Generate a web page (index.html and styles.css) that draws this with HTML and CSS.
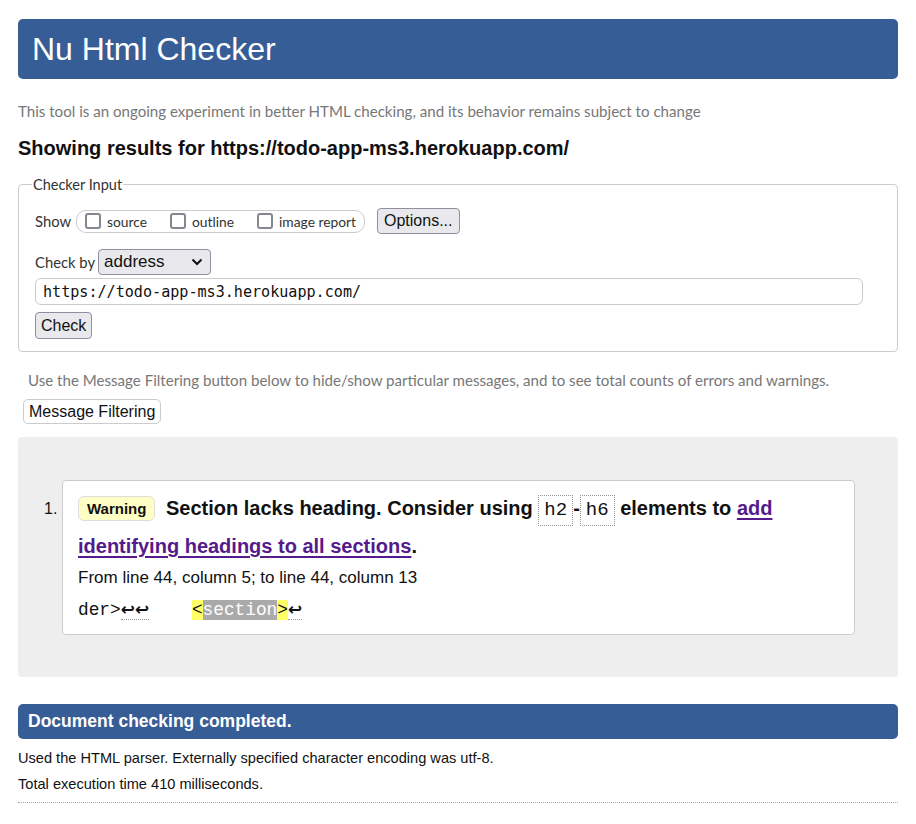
FILE: index.html
```html
<!DOCTYPE html>
<html lang="en">
<head>
<meta charset="utf-8">
<title>Nu Html Checker</title>
<link rel="stylesheet" href="styles.css">
</head>
<body>
<h1 class="title">Nu Html Checker</h1>
<p class="intro">This tool is an ongoing experiment in better HTML checking, and its behavior remains subject to change</p>
<h2 class="showing">Showing results for https://todo-app-ms3.herokuapp.com/</h2>

<fieldset class="input">
  <legend>Checker Input</legend>
  <div class="row show-row">
    <span class="label">Show</span>
    <span class="opts">
      <label class="opt"><span class="cb"></span>source</label>
      <label class="opt"><span class="cb"></span>outline</label>
      <label class="opt"><span class="cb"></span>image report</label>
    </span>
    <button class="btn options">Options...</button>
  </div>
  <div class="row by-row">
    <span class="label">Check by</span>
    <span class="select">address
      <svg class="chev" width="12" height="8" viewBox="0 0 12 8"><path d="M1.5 1.5 L6 6 L10.5 1.5" fill="none" stroke="#111" stroke-width="2"/></svg>
    </span>
  </div>
  <div class="url">https://todo-app-ms3.herokuapp.com/</div>
  <button class="btn check">Check</button>
</fieldset>

<p class="filter-note">Use the Message Filtering button below to hide/show particular messages, and to see total counts of errors and warnings.</p>
<button class="filter-btn">Message Filtering</button>

<div class="results">
  <ol class="messages">
    <li class="msg">
      <p class="msg-text"><span class="badge">Warning</span> <span class="msg-body">Section lacks heading. Consider using <code class="tag">h2</code>-<code class="tag">h6</code> elements to <a href="#">add identifying headings to all sections</a>.</span></p>
      <p class="location">From line 44, column 5; to line 44, column 13</p>
      <p class="extract"><code>der&gt;<span class="lf">↩↩</span>    <b class="hl"><span class="edge">&lt;</span><span class="mid">section</span><span class="edge">&gt;</span></b><span class="lf">↩</span></code></p>
    </li>
  </ol>
</div>

<h2 class="done">Document checking completed.</h2>
<p class="stat first">Used the HTML parser. Externally specified character encoding was utf-8.</p>
<p class="stat">Total execution time 410 milliseconds.</p>
<hr class="rule">
</body>
</html>
```
FILE: styles.css
```css
html, body { margin: 0; padding: 0; background: #fff; }
body {
  padding: 19px 18px 0 18px;
  font-family: "Liberation Sans", Arial, sans-serif;
  color: #111;
}
.title {
  margin: 0;
  height: 60px;
  box-sizing: border-box;
  padding: 11px 14px 0;
  background: #365d96;
  color: #fff;
  border-radius: 5px;
  font-weight: normal;
  font-size: 32px;
  line-height: 38px;
}
.intro {
  margin: 22px 0 0;
  font-family: "Lato", "Noto Sans", sans-serif;
  font-size: 15.1px;
  line-height: 20px;
  color: #777;
}
.showing {
  margin: 15px 0 0;
  font-size: 20px;
  line-height: 24px;
  font-weight: bold;
  color: #111;
}
.input {
  margin: 16px 0 0;
  padding: 14px 16px 12px 16px;
  border: 1px solid #ccc;
  border-radius: 4px;
  min-width: 0;
}
.input legend {
  padding: 0 1px;
  margin-left: -3px;
  font-family: "Lato", "Noto Sans", sans-serif;
  font-size: 14.5px;
  color: #333;
}
.row { display: flex; align-items: center; }
.label {
  font-family: "Lato", "Noto Sans", sans-serif;
  font-size: 14.8px;
  color: #333;
}
.show-row { height: 28px; }
.opts {
  display: inline-flex;
  align-items: center;
  margin-left: 5px;
  height: 23px;
  padding: 0 8px 0 8px;
  border: 1px solid #ccc;
  border-radius: 10px;
  box-sizing: border-box;
}
.opt {
  display: inline-flex;
  align-items: center;
  font-family: "Lato", "Noto Sans", sans-serif;
  font-size: 13.8px;
  color: #333;
  margin-right: 23px;
}
.opt:last-child { margin-right: 0; }
.cb {
  display: inline-block;
  width: 12px;
  height: 12px;
  border: 2px solid #868690;
  border-radius: 3px;
  margin-right: 6px;
}
.btn {
  font-family: "Liberation Sans", Arial, sans-serif;
  font-size: 16px;
  color: #111;
  background: #e9e9ed;
  border: 1px solid #8f8f9d;
  border-radius: 4px;
  padding: 0 6px;
  height: 26px;
  line-height: 24px;
}
.options { margin-left: 12px; padding: 0 6px; }
.by-row { margin-top: 14px; height: 26px; }
.select {
  display: inline-flex;
  align-items: center;
  justify-content: space-between;
  box-sizing: border-box;
  width: 113px;
  height: 26px;
  margin-left: 3px;
  padding: 0 7px 0 5px;
  background: #e9e9ed;
  border: 1px solid #8f8f9d;
  border-radius: 4px;
  font-size: 17px;
  color: #111;
}
.url {
  margin-top: 3px;
  height: 27px;
  box-sizing: border-box;
  width: 828px;
  padding: 3px 7px 0;
  border: 1px solid #ccc;
  border-radius: 6px;
  font-family: "DejaVu Sans Mono", monospace;
  font-size: 15.1px;
  line-height: 20px;
  color: #111;
}
.check { display: block; margin-top: 7px; height: 27px; padding: 0 5px; }
.filter-note {
  margin: 18px 0 0 10px;
  font-family: "Lato", "Noto Sans", sans-serif;
  font-size: 15.1px;
  line-height: 20px;
  color: #777;
}
.filter-btn {
  display: block;
  margin: 9px 0 0 5px;
  height: 25px;
  padding: 0 5px;
  background: #fff;
  border: 1px solid #ccc;
  border-radius: 5px;
  font-family: "Liberation Sans", Arial, sans-serif;
  font-size: 16px;
  color: #111;
}
.results {
  margin-top: 13px;
  background: #eee;
  border-radius: 4px;
  padding: 43px 43px 42px 0;
}
.messages { margin: 0; padding: 0 0 0 44px; list-style: none; counter-reset: m; }
.msg {
  position: relative;
  background: #fff;
  border: 1px solid #ccc;
  border-radius: 4px;
  padding: 8px 16px 11px 15px;
  counter-increment: m;
}
.msg::before {
  content: counter(m) ".";
  position: absolute;
  left: -19px;
  top: 19px;
  font-size: 16px;
  color: #111;
}
.msg-text {
  margin: 0;
  font-size: 20px;
  line-height: 38px;
  font-weight: bold;
  color: #111;
}
.badge {
  display: inline-block;
  vertical-align: 1px;
  height: 25px;
  box-sizing: border-box;
  line-height: 23px;
  padding: 0 8px;
  background: #ffffc5;
  border: 1px solid #ddd;
  border-radius: 6px;
  font-size: 15px;
  font-weight: bold;
  margin-right: 5px;
}
.tag {
  font-family: "Liberation Mono", "Courier New", monospace;
  font-weight: normal;
  font-size: 19px;
  line-height: 20px;
  padding: 3px 5px 4px;
  border: 1px dotted #999;
}
.msg-body a { color: #551a8b; text-decoration: underline; text-underline-offset: 3px; text-decoration-thickness: 2px; }
.location {
  margin: 0;
  font-size: 17px;
  line-height: 26px;
  color: #111;
}
.extract {
  margin: 6px 0 0;
  line-height: 26px;
}
.extract code {
  font-family: "Liberation Mono", "Courier New", monospace;
  font-size: 17.8px;
  white-space: pre;
  color: #111;
}
.lf {
  font-family: "DejaVu Sans", sans-serif;
  font-weight: bold;
  font-size: 17px;
  line-height: 20px;
  border-bottom: 1px dotted #999;
}
.hl { font-weight: normal; }
.edge { background: #ffff66; }
.mid { background: #aaa; color: #fff; }
.done {
  margin: 27px 0 0;
  height: 35px;
  box-sizing: border-box;
  padding: 6px 10px 0;
  background: #365d96;
  color: #fff;
  border-radius: 5px;
  font-size: 17.5px;
  line-height: 23px;
  font-weight: bold;
}
.stat {
  margin: 0;
  font-size: 14.6px;
  line-height: 26px;
  color: #111;
}
.stat.first { margin-top: 6px; }
.rule {
  margin: 5px 0 0;
  border: 0;
  border-top: 1px dotted #aaa;
}
```
